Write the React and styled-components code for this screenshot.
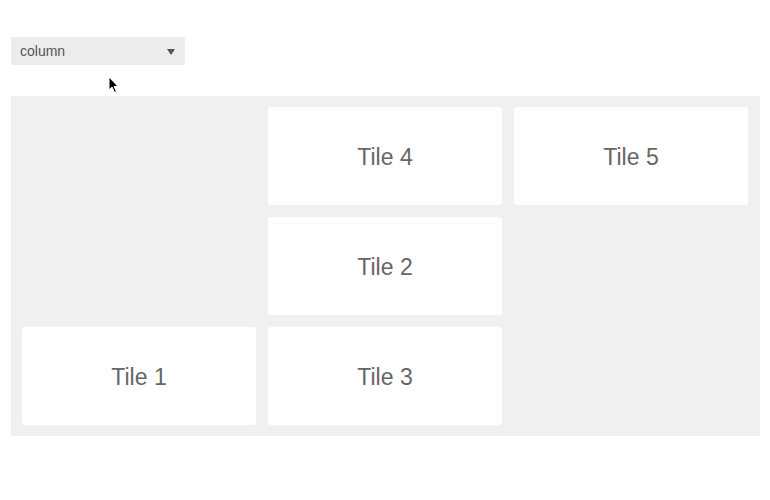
import React, { useState } from "react";
import styled, { createGlobalStyle } from "styled-components";

const GlobalStyle = createGlobalStyle`
  html, body {
    margin: 0;
    padding: 0;
    background: #fff;
    font-family: "Liberation Sans", Arial, sans-serif;
  }
`;

const Page = styled.div`
  position: relative;
  padding: 37px 10px 0 11px;
  display: flex;
  flex-direction: column;
  gap: 31px;
`;

const SelectBox = styled.div`
  width: 174px;
  height: 28px;
  box-sizing: border-box;
  background: #ececec;
  border-radius: 2px;
  display: flex;
  align-items: center;
  justify-content: space-between;
  padding: 0 10px 0 9px;
  font-size: 14px;
  color: #555;
`;

const Caret = styled.span`
  width: 0;
  height: 0;
  border-left: 4px solid transparent;
  border-right: 4px solid transparent;
  border-top: 6px solid #555;
  margin-top: 1px;
`;

const Cursor = styled.svg`
  position: absolute;
  left: 108px;
  top: 76px;
`;

const Board = styled.div`
  width: 749px;
  height: 340px;
  box-sizing: border-box;
  background: #f0f0f0;
  padding: 11px 12px 11px 11px;
  display: grid;
  grid-template-columns: repeat(3, 234px);
  grid-template-rows: repeat(3, 98px);
  gap: 12px;
`;

const Tile = styled.div`
  grid-column: ${(p) => p.$col};
  grid-row: ${(p) => p.$row};
  background: #fff;
  border-radius: 3px;
  display: flex;
  align-items: center;
  justify-content: center;
  padding-top: 3px;
  box-sizing: border-box;
  font-size: 23px;
  color: #666;
`;

const tiles = [
  { name: "Tile 1", col: 1, row: 3 },
  { name: "Tile 2", col: 2, row: 2 },
  { name: "Tile 3", col: 2, row: 3 },
  { name: "Tile 4", col: 2, row: 1 },
  { name: "Tile 5", col: 3, row: 1 },
];

export default function App() {
  const [mode] = useState("column");
  return (
    <>
      <GlobalStyle />
      <Page>
        <SelectBox>
          <span>{mode}</span>
          <Caret />
        </SelectBox>
        <Board>
          {tiles.map((t) => (
            <Tile key={t.name} $col={t.col} $row={t.row}>
              {t.name}
            </Tile>
          ))}
        </Board>
        <Cursor width="12" height="18" viewBox="0 0 12 18">
          <path
            d="M1 1 L1 14 L4 11 L6.5 16.5 L8.5 15.5 L6 10.5 L10 10.5 Z"
            fill="#000"
            stroke="#fff"
            strokeWidth="1"
            strokeLinejoin="round"
          />
        </Cursor>
      </Page>
    </>
  );
}
